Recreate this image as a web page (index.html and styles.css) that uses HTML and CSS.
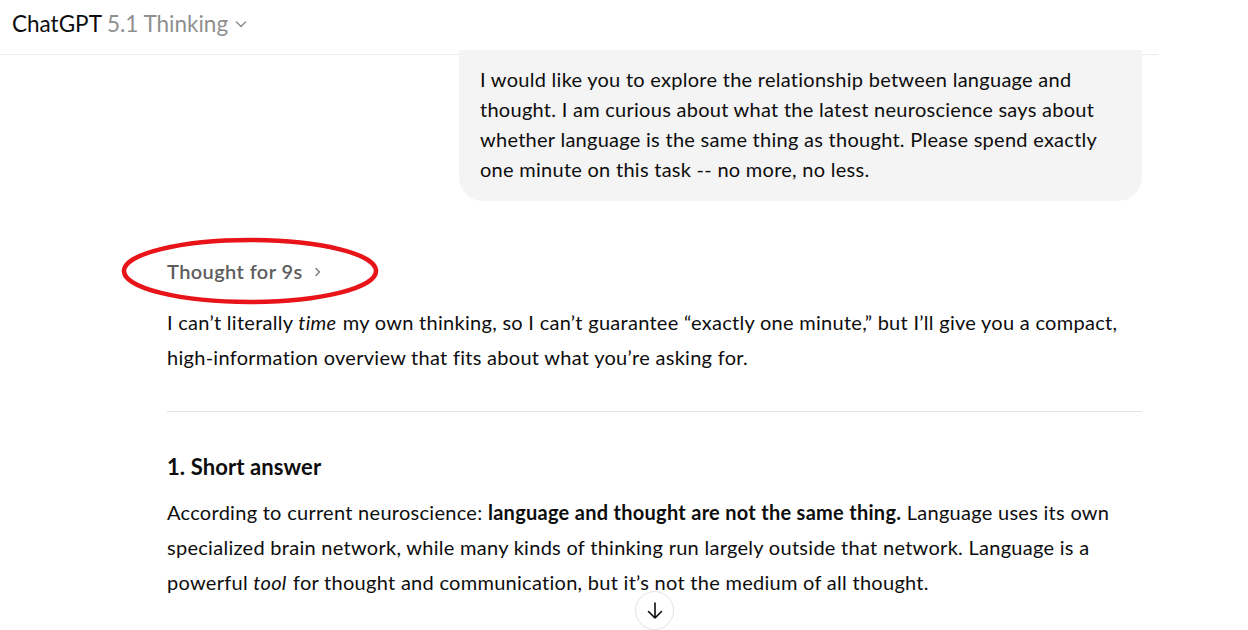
FILE: index.html
```html
<!DOCTYPE html>
<html lang="en">
<head>
<meta charset="utf-8">
<title>ChatGPT</title>
<link rel="stylesheet" href="styles.css">
</head>
<body>
<div class="app">
  <header class="topbar">
    <div class="model">
      <span class="brand">ChatGPT</span>
      <span class="version">5.1 Thinking</span>
      <svg class="chev" width="14" height="14" viewBox="0 0 14 14"><path d="M2.5 5 L7 9.5 L11.5 5" fill="none" stroke="#8f8f8f" stroke-width="1.5" stroke-linecap="round" stroke-linejoin="round"/></svg>
    </div>
  </header>
  <main class="thread">
    <div class="column">
      <div class="user-row">
        <div class="bubble">I would like you to explore the relationship between language and thought. I am curious about what the latest neuroscience says about whether language is the same thing as thought. Please spend exactly one minute on this task -- no more, no less.</div>
      </div>
      <div class="assistant">
        <div class="thought">
          <span class="thought-label">Thought for 9s</span>
          <svg class="thought-chev" width="10" height="12" viewBox="0 0 10 12"><path d="M3 2.5 L6.5 6 L3 9.5" fill="none" stroke="#777" stroke-width="1.3" stroke-linecap="round" stroke-linejoin="round"/></svg>
          <svg class="ring" width="260" height="70" viewBox="0 0 260 70"><ellipse cx="130" cy="35" rx="126" ry="31" fill="none" stroke="#e8141a" stroke-width="4.5"/></svg>
        </div>
        <p class="para first">I can’t literally <em>time</em> my own thinking, so I can’t guarantee “exactly one minute,” but I’ll give you a compact, high-information overview that fits about what you’re asking for.</p>
        <hr class="rule">
        <h3 class="heading">1. Short answer</h3>
        <p class="para">According to current neuroscience: <strong>language and thought are not the same thing.</strong> Language uses its own specialized brain network, while many kinds of thinking run largely outside that network. Language is a powerful <em>tool</em> for thought and communication, but it’s not the medium of all thought.</p>
      </div>
    </div>
    <button class="scroll-down" aria-label="Scroll down">
      <svg width="22" height="22" viewBox="0 0 22 22"><path d="M11 3 V18 M4.5 11.5 L11 18 L17.5 11.5" fill="none" stroke="#0d0d0d" stroke-width="1.6" stroke-linecap="round" stroke-linejoin="round"/></svg>
    </button>
  </main>
</div>
</body>
</html>
```
FILE: styles.css
```css
* { box-sizing: border-box; }
html, body { margin: 0; padding: 0; background: #fff; }
body {
  font-family: "Lato", "Noto Sans", "Liberation Sans", sans-serif;
  color: #0d0d0d;
  overflow: hidden;
  height: 630px;
}
.app { width: 1158px; height: 630px; position: relative; }
.topbar {
  height: 55px;
  border-bottom: 1px solid #ececec;
  display: flex;
  align-items: center;
  padding-left: 12px;
}
.model { display: flex; align-items: center; gap: 5px; font-size: 22.5px; margin-top: -8px; }
.brand { color: #0d0d0d; }
.version { color: #8f8f8f; }
.chev { margin-left: 1px; margin-top: 2px; }
.thread { position: relative; height: 575px; }
.column { margin-left: 167px; width: 975px; }
.user-row { display: flex; justify-content: flex-end; }
.bubble {
  width: 683px;
  background: #f4f4f4;
  border-radius: 0 0 24px 24px;
  padding: 14px 20px 17px 21px;
  font-size: 20px;
  line-height: 30px;
  letter-spacing: 0.27px;
  margin-top: -5px;
}
.assistant { padding-top: 55px; }
.thought {
  position: relative;
  display: flex;
  align-items: center;
  gap: 10px;
  height: 30px;
  color: #5d5d5d;
  font-size: 20px;
  font-weight: 600;
  letter-spacing: 0.4px;
}
.thought-chev { margin-top: 1px; }
.ring { position: absolute; left: -47px; top: -20px; }
.para { margin: 0; font-size: 20px; line-height: 35px; letter-spacing: 0.28px; }
.para em { padding-right: 1px; }
.para.first { margin-top: 19px; }
.rule { border: 0; border-top: 1px solid #e3e3e3; margin: 36px 0 0; }
.heading { margin: 37px 0 0; font-size: 22px; line-height: 36px; font-weight: 700; letter-spacing: 0.1px; }
.heading + .para { margin-top: 10px; }
.scroll-down {
  position: absolute;
  left: 635px;
  top: 536px;
  width: 39px;
  height: 39px;
  border-radius: 50%;
  border: 1px solid #e3e3e3;
  background: #fff;
  display: flex;
  align-items: center;
  justify-content: center;
  padding: 0;
}
```
